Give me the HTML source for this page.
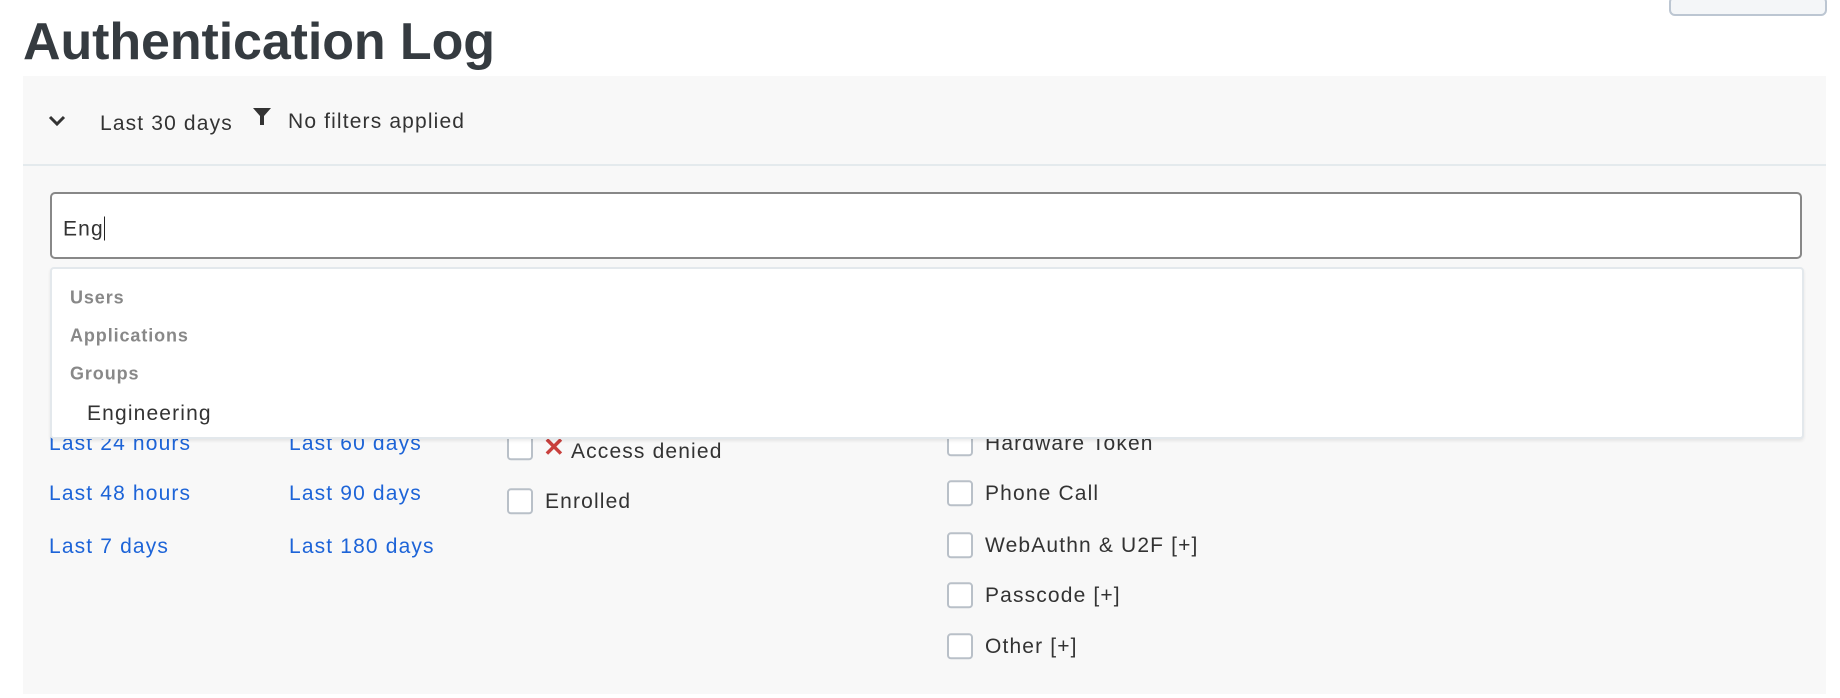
<!DOCTYPE html>
<html><head><style>
body{margin:0;width:1840px;height:698px;background:#fff;font-family:"Liberation Sans",Arial,sans-serif;position:relative;overflow:hidden;color:#333}
.a{position:absolute;white-space:nowrap}
h1{position:absolute;left:23px;top:12px;margin:0;font-size:52px;font-weight:bold;color:#353b40;letter-spacing:-0.1px}
.panel{position:absolute;left:23px;top:76px;width:1803px;height:618px;background:#f8f8f8}
.div{position:absolute;left:23px;top:164px;width:1803px;height:2px;background:#e4eaed}
.t{font-size:21px;color:#333;transform:translateY(-42%);letter-spacing:1.15px}
.l{font-size:21px;color:#1d64d8;transform:translateY(-42%);letter-spacing:1.15px}
.cb{position:absolute;width:22px;height:22px;border:2px solid #b9c0c8;border-radius:4px;background:#fff;transform:translateY(-45%)}
.lab{font-size:18px;font-weight:bold;color:#888;transform:translateY(-45%);letter-spacing:0.9px}
</style></head><body>
<div class="a" style="left:1669px;top:-4px;width:154px;height:16px;border:2px solid #bcc6d2;border-radius:6px;background:#f4f6f8"></div>
<h1>Authentication Log</h1>
<div class="panel"></div>
<div class="div"></div>
<svg class="a" style="left:48px;top:115px" width="18" height="12" viewBox="0 0 18 12"><path d="M2 2l7 7 7-7" fill="none" stroke="#333" stroke-width="3"/></svg>
<div class="a t" style="left:100px;top:122px">Last 30 days</div>
<svg class="a" style="left:253px;top:108px" width="18" height="18" viewBox="0 0 18 18"><path d="M0 0h18L11 8v9H7V8z" fill="#333"/></svg>
<div class="a t" style="left:288px;top:120px">No filters applied</div>
<div class="a" style="left:50px;top:192px;width:1748px;height:63px;border:2px solid #888;border-radius:5px;background:#fff"></div>
<div class="a t" style="left:63px;top:227px">Eng<span style="display:inline-block;width:1.5px;height:24px;background:#222;vertical-align:-5px"></span></div>

<div class="a l" style="left:49px;top:442px">Last 24 hours</div>
<div class="a l" style="left:49px;top:492px">Last 48 hours</div>
<div class="a l" style="left:49px;top:545px">Last 7 days</div>
<div class="a l" style="left:289px;top:442px">Last 60 days</div>
<div class="a l" style="left:289px;top:492px">Last 90 days</div>
<div class="a l" style="left:289px;top:545px">Last 180 days</div>
<div class="cb" style="left:507px;top:446px"></div>
<div class="a" style="left:543px;top:434px;font-size:26px;color:#c9403d;font-weight:bold;line-height:1">✕</div>
<div class="a t" style="left:571px;top:450px">Access denied</div>
<div class="cb" style="left:507px;top:500px"></div>
<div class="a t" style="left:545px;top:500px">Enrolled</div>
<div class="cb" style="left:947px;top:442px"></div><div class="a t" style="left:985px;top:442px">Hardware Token</div>
<div class="cb" style="left:947px;top:492px"></div><div class="a t" style="left:985px;top:492px">Phone Call</div>
<div class="cb" style="left:947px;top:544px"></div><div class="a t" style="left:985px;top:544px">WebAuthn &amp; U2F [+]</div>
<div class="cb" style="left:947px;top:594px"></div><div class="a t" style="left:985px;top:594px">Passcode [+]</div>
<div class="cb" style="left:947px;top:645px"></div><div class="a t" style="left:985px;top:645px">Other [+]</div>

<div class="a" style="left:50px;top:267px;width:1750px;height:168px;border:2px solid #e3e8ec;border-radius:4px;background:#fff;box-shadow:0 2px 3px rgba(0,0,0,.08)"></div>
<div class="a lab" style="left:70px;top:297px">Users</div>
<div class="a lab" style="left:70px;top:335px">Applications</div>
<div class="a lab" style="left:70px;top:373px">Groups</div>
<div class="a t" style="left:87px;top:412px">Engineering</div>
</body></html>
